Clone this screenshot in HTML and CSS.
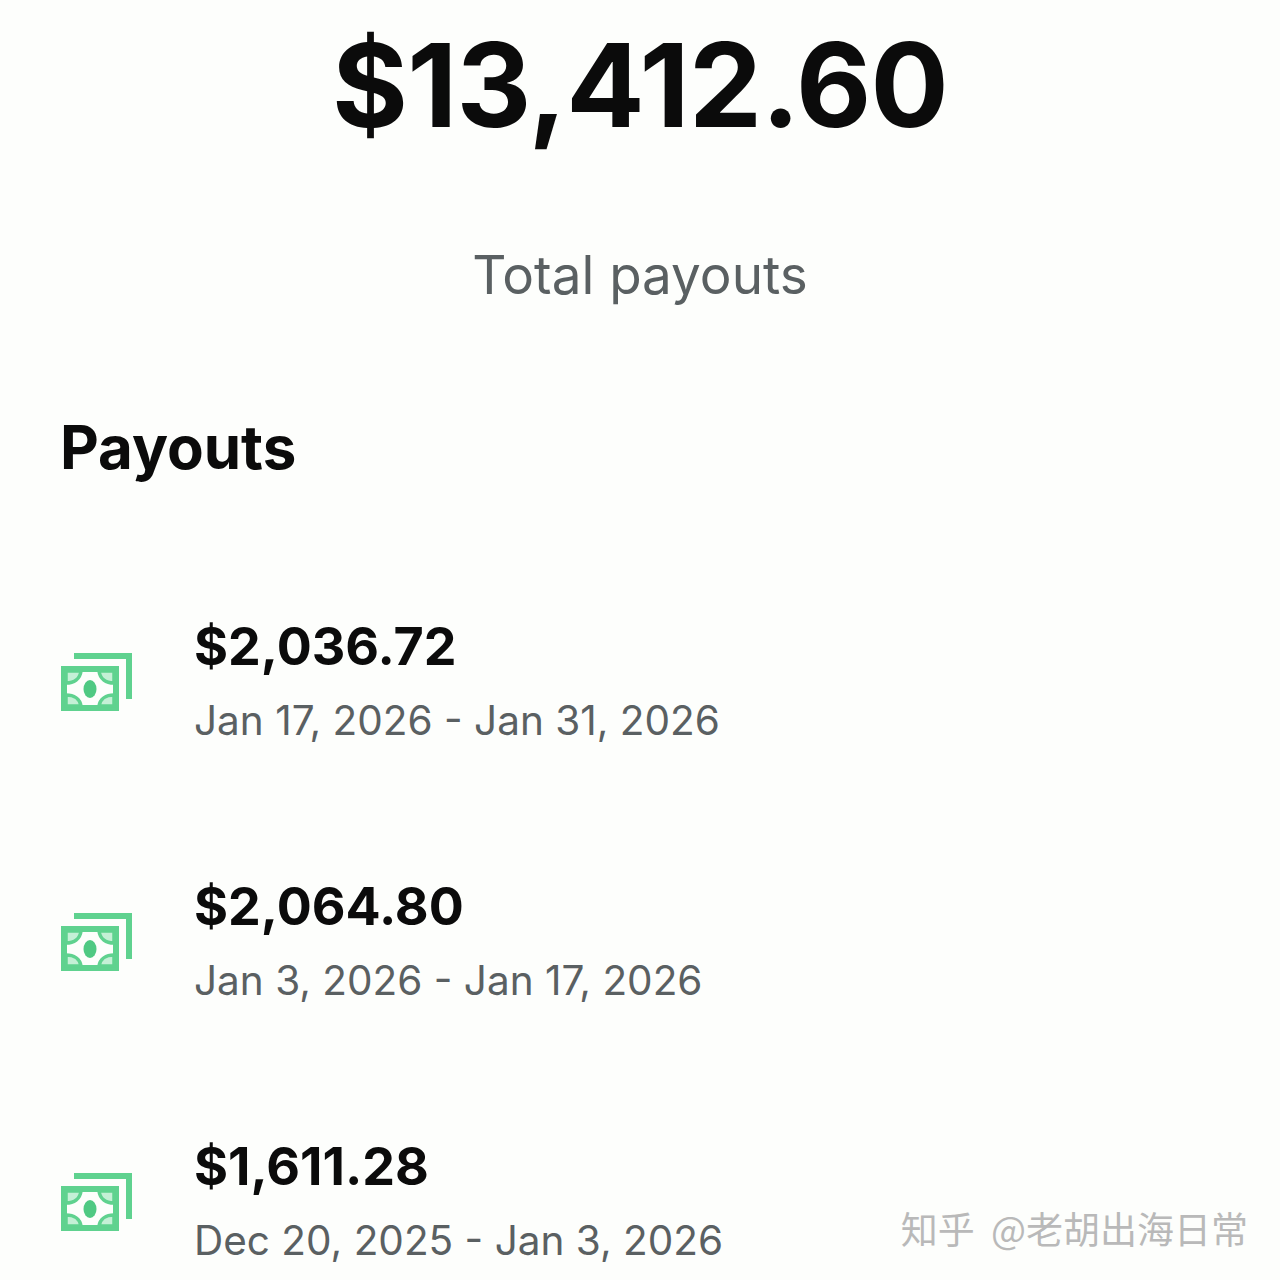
FILE: index.html
```html
<!DOCTYPE html>
<html lang="en">
<head>
  <meta charset="UTF-8">
  <title>Total payouts</title>
  <link rel="stylesheet" href="styles.css">
</head>
<body>
  <svg class="icon-defs" width="0" height="0">
    <symbol id="cash" viewBox="0 0 74 62">
      <path d="M14 5H69V48" fill="none" stroke="#5fd28f" stroke-width="6"/>
      <rect x="4" y="18" width="52" height="39" fill="none" stroke="#5fd28f" stroke-width="6"/>
      <g fill="#c4f0d6" stroke="#5fd28f" stroke-width="3.5">
        <path d="M6 32C14 32 20 28 21 20H6Z"/>
        <path d="M54 32C46 32 40 28 39 20H54Z"/>
        <path d="M6 44C14 44 20 48 21 55H6Z"/>
        <path d="M54 44C46 44 40 48 39 55H54Z"/>
      </g>
      <ellipse cx="30" cy="38" rx="6.5" ry="9" fill="#4fc983"/>
    </symbol>
  </svg>

  <div class="container">
    <div class="summary">
      <div class="total">$13,412.60</div>
      <div class="total-label">Total payouts</div>
    </div>

    <h2 class="section-title">Payouts</h2>

    <div class="payout-list">
      <div class="payout">
        <svg class="cash-icon"><use href="#cash"/></svg>
        <div class="payout-info">
          <div class="amount">$2,036.72</div>
          <div class="period">Jan 17, 2026 - Jan 31, 2026</div>
        </div>
      </div>
      <div class="payout">
        <svg class="cash-icon"><use href="#cash"/></svg>
        <div class="payout-info">
          <div class="amount">$2,064.80</div>
          <div class="period">Jan 3, 2026 - Jan 17, 2026</div>
        </div>
      </div>
      <div class="payout">
        <svg class="cash-icon"><use href="#cash"/></svg>
        <div class="payout-info">
          <div class="amount">$1,611.28</div>
          <div class="period">Dec 20, 2025 - Jan 3, 2026</div>
        </div>
      </div>
    </div>
  </div>

  <div class="watermark">知乎 @老胡出海日常</div>
</body>
</html>
```

FILE: styles.css
```css
* {
  margin: 0;
  padding: 0;
  box-sizing: border-box;
}

html, body {
  height: 1280px;
  overflow: hidden;
}

body {
  font-family: Inter, "Noto Sans", sans-serif;
  background: #fdfefc;
  color: #0b0b0b;
  position: relative;
}

.icon-defs {
  position: absolute;
}

.container {
  padding: 0 60px;
}

.summary {
  text-align: center;
  padding-top: 17px;
}

.total {
  font-size: 116px;
  line-height: 136px;
  font-weight: 700;
  letter-spacing: -0.7px;
}

.total-label {
  margin-top: 92px;
  font-size: 53px;
  line-height: 60px;
  color: #5a6062;
}

.section-title {
  margin-top: 109px;
  font-size: 60px;
  line-height: 66px;
  font-weight: 700;
}

.payout-list {
  margin-top: 137px;
  display: flex;
  flex-direction: column;
  gap: 131px;
}

.payout {
  display: flex;
  align-items: center;
  gap: 60px;
}

.cash-icon {
  width: 74px;
  height: 62px;
  flex-shrink: 0;
}

.amount {
  font-size: 52px;
  line-height: 60px;
  font-weight: 700;
}

.period {
  margin-top: 19px;
  font-size: 40.5px;
  line-height: 50px;
  color: #5a6062;
}

.watermark {
  position: absolute;
  right: 32px;
  bottom: 30px;
  font-family: "Noto Sans CJK SC", sans-serif;
  font-size: 37px;
  line-height: 44px;
  word-spacing: 8px;
  color: #b9b9b9;
}
```
